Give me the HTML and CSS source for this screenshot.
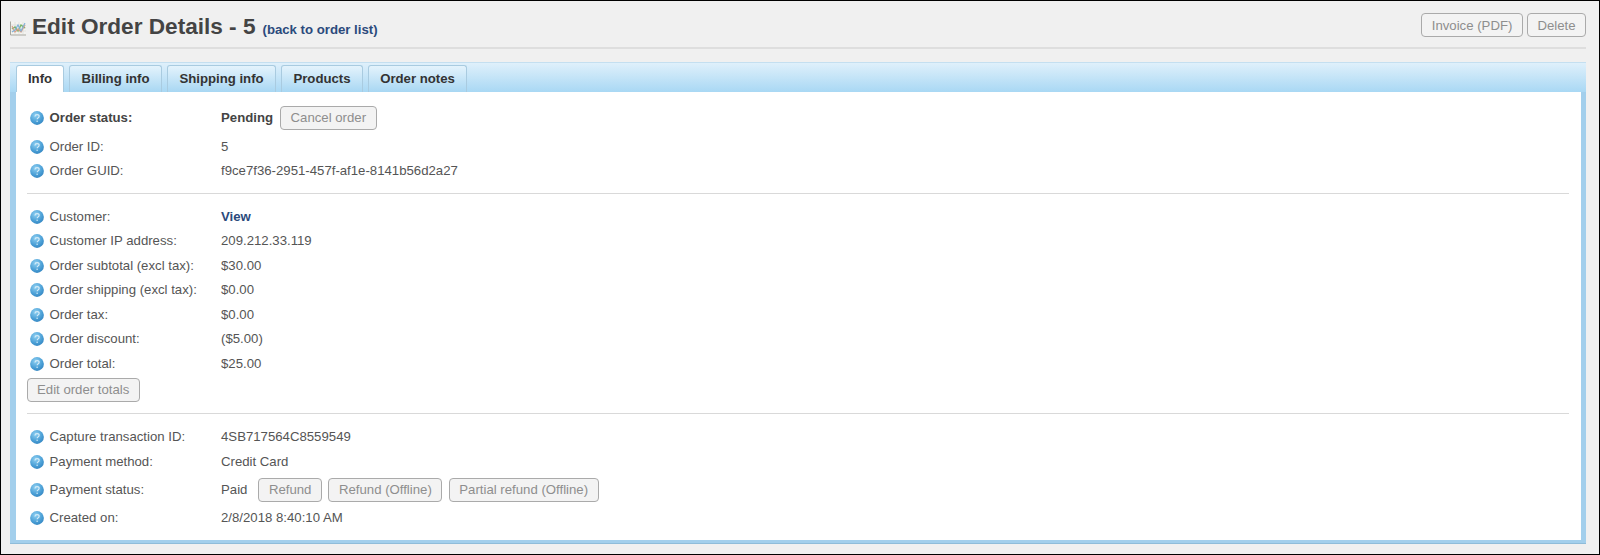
FILE: index.html
```html
<!DOCTYPE html>
<html lang="en">
<head>
<meta charset="utf-8">
<title>Edit Order Details</title>
<link rel="stylesheet" href="styles.css">
</head>
<body>
<svg class="defs" width="0" height="0" aria-hidden="true">
  <defs>
    <radialGradient id="hb" cx="0.4" cy="0.3" r="0.8">
      <stop offset="0" stop-color="#8fd0f2"/>
      <stop offset="0.6" stop-color="#4a9fd6"/>
      <stop offset="1" stop-color="#2f80bd"/>
    </radialGradient>
    <symbol id="help" viewBox="0 0 13 13">
      <circle cx="6.5" cy="6.5" r="6.4" fill="url(#hb)"/>
      <path d="M4.6 5.1c.1-1.2 1-1.8 2-1.8 1.1 0 1.9.7 1.9 1.6 0 .8-.5 1.2-1.1 1.6-.5.3-.7.6-.7 1.1" fill="none" stroke="#d5ecf8" stroke-width="1.1"/>
      <circle cx="6.6" cy="9.6" r=".7" fill="#d5ecf8"/>
    </symbol>
  </defs>
</svg>
<div class="page">
  <header class="head">
    <div class="title-wrap">
      <svg class="chart" width="16" height="15" viewBox="0 0 16 15" aria-hidden="true">
        <rect x="1" y="1" width="14.5" height="12.5" fill="#f4f4f0"/>
        <path d="M1 4h15M1 7h15M1 10h15M5 1v12M9 1v12M13 1v12" stroke="#dadada" stroke-width=".7"/>
        <path d="M.5 .5v13.5H16" fill="none" stroke="#a8a8a0" stroke-width="1"/>
        <path d="M2 8l3-2 3 4 3-6 4 3" fill="none" stroke="#78b56a" stroke-width="1.4"/>
        <path d="M2 5l3 6 3-3 3 3 4-7" fill="none" stroke="#d9a08a" stroke-width="1.2"/>
        <path d="M2 11l3-2 3-5 3 6 4-8" fill="none" stroke="#7fb0d8" stroke-width="1.1"/>
      </svg>
      <h1 class="title">Edit Order Details - 5</h1>
      <a class="back" href="#">(back to order list)</a>
    </div>
    <div class="head-actions">
      <button class="btn" type="button">Invoice (PDF)</button>
      <button class="btn" type="button">Delete</button>
    </div>
  </header>

  <section class="panel">
    <nav class="tabs">
      <a class="tab tab-info active" href="#">Info</a>
      <a class="tab tab-billing" href="#">Billing info</a>
      <a class="tab tab-shipping" href="#">Shipping info</a>
      <a class="tab tab-products" href="#">Products</a>
      <a class="tab tab-notes" href="#">Order notes</a>
    </nav>
    <div class="content">
      <div class="row row-status strong">
        <svg class="help"><use href="#help"/></svg><span class="label">Order status:</span>
        <span class="value">Pending</span><button class="btn" type="button">Cancel order</button>
      </div>
      <div class="row"><svg class="help"><use href="#help"/></svg><span class="label">Order ID:</span><span class="value">5</span></div>
      <div class="row"><svg class="help"><use href="#help"/></svg><span class="label">Order GUID:</span><span class="value">f9ce7f36-2951-457f-af1e-8141b56d2a27</span></div>
      <hr class="sep">
      <div class="row"><svg class="help"><use href="#help"/></svg><span class="label">Customer:</span><a class="value link" href="#">View</a></div>
      <div class="row"><svg class="help"><use href="#help"/></svg><span class="label">Customer IP address:</span><span class="value">209.212.33.119</span></div>
      <div class="row"><svg class="help"><use href="#help"/></svg><span class="label">Order subtotal (excl tax):</span><span class="value">$30.00</span></div>
      <div class="row"><svg class="help"><use href="#help"/></svg><span class="label">Order shipping (excl tax):</span><span class="value">$0.00</span></div>
      <div class="row"><svg class="help"><use href="#help"/></svg><span class="label">Order tax:</span><span class="value">$0.00</span></div>
      <div class="row"><svg class="help"><use href="#help"/></svg><span class="label">Order discount:</span><span class="value">($5.00)</span></div>
      <div class="row"><svg class="help"><use href="#help"/></svg><span class="label">Order total:</span><span class="value">$25.00</span></div>
      <button class="btn btn-totals" type="button">Edit order totals</button>
      <hr class="sep sep-totals">
      <div class="row"><svg class="help"><use href="#help"/></svg><span class="label">Capture transaction ID:</span><span class="value">4SB717564C8559549</span></div>
      <div class="row"><svg class="help"><use href="#help"/></svg><span class="label">Payment method:</span><span class="value">Credit Card</span></div>
      <div class="row row-pay">
        <svg class="help"><use href="#help"/></svg><span class="label">Payment status:</span>
        <span class="value">Paid</span>
        <button class="btn" type="button">Refund</button>
        <button class="btn" type="button">Refund (Offline)</button>
        <button class="btn" type="button">Partial refund (Offline)</button>
      </div>
      <div class="row"><svg class="help"><use href="#help"/></svg><span class="label">Created on:</span><span class="value">2/8/2018 8:40:10 AM</span></div>
    </div>
  </section>
</div>
</body>
</html>
```

FILE: styles.css
```css
* { box-sizing: border-box; }
html, body { height: 100%; }
body {
  margin: 0;
  background: #f0f0f0;
  font-family: "Liberation Sans", Arial, sans-serif;
  font-size: 13.2px;
  color: #555;
  overflow: hidden;
}
.defs { position: absolute; }
.page {
  height: 555px;
  border: 1px solid #000;
  padding: 0 13px 0 9px;
}
.head {
  display: flex;
  justify-content: space-between;
  align-items: flex-start;
  height: 48px;
  padding-top: 12px;
  border-bottom: 2px solid #dedede;
}
.title-wrap { display: flex; align-items: baseline; }
.chart { align-self: center; margin-top: 4px; margin-right: 6px; }
.title {
  margin: 0 7px 0 0;
  font-size: 22.6px;
  font-weight: bold;
  line-height: 27px;
  color: #444;
}
.back { font-size: 13.2px; font-weight: bold; color: #2b4a7c; text-decoration: none; }
.head-actions { display: flex; gap: 4px; }
.btn {
  height: 24px;
  padding: 0 9.5px;
  border: 1px solid #aaa;
  border-radius: 4px;
  background: #f3f3f3;
  font-family: inherit;
  font-size: 13.2px;
  color: #8e8e8e;
}
.panel {
  margin-top: 13px;
  height: 482px;
  padding: 2px 5px 5px 6px;
  border-top: 1px solid #c4dff0;
  background: linear-gradient(#dff0fb 0, #a9d8f4 29px, #a3cfec 29px);
  box-shadow: inset 0 -1px 0 #8fbcd9;
}
.tabs { display: flex; gap: 5px; height: 27px; }
.tab {
  display: flex;
  align-items: center;
  justify-content: center;
  height: 27px;
  padding-bottom: 2px;
  border: 1px solid #a9cbe0;
  border-bottom: 0;
  border-radius: 3px 3px 0 0;
  background: linear-gradient(#e4f3fc, #a8d7f3);
  font-weight: bold;
  color: #333;
  text-decoration: none;
}
.tab.active { background: #fff; }
.tab-info { width: 48px; }
.tab-billing { width: 93px; }
.tab-shipping { width: 109px; }
.tab-products { width: 82px; }
.tab-notes { width: 99px; }
.content {
  height: 448px;
  padding: 9px 12px 0 10.5px;
  background: #fff;
}
.row {
  display: flex;
  align-items: center;
  height: 24.5px;
}
.help { width: 14px; height: 14px; flex: none; margin: 1px 6px 0 3px; }
.label { width: 171.5px; flex: none; }
.value { flex: none; color: #555; }
.strong .label, .strong .value { font-weight: bold; color: #444; }
.link { font-weight: bold; color: #2b4a7c; text-decoration: none; }
.row-status { height: 33px; }
.row-status .value { margin-right: 7px; }
.row-pay { height: 32px; }
.row-pay .value { margin-right: 11px; }
.row-pay .btn + .btn { margin-left: 6.5px; }
.sep {
  height: 1px;
  margin: 10px 0;
  border: 0;
  background: #d9d9d9;
}
.btn-totals { display: block; margin-top: 2px; }
.sep-totals { margin: 11px 0 11px; }
```
